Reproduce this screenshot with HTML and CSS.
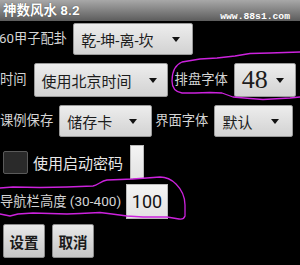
FILE: index.html
```html
<!DOCTYPE html>
<html>
<head>
<meta charset="utf-8">
<link rel="stylesheet" href="styles.css">
</head>
<body>
<div class="screen">
  <div class="titlebar">
    <span class="title">神数风水 8.2</span>
    <span class="watermark">www.88s1.com</span>
  </div>
  <div class="content">
    <div class="row row1">
      <span class="label l-gua">60甲子配卦</span>
      <div class="spinner s-gua"><span class="val">乾-坤-离-坎</span><span class="arrow"></span></div>
    </div>
    <div class="row row2">
      <span class="label">时间</span>
      <div class="spinner s-time"><span class="val">使用北京时间</span><span class="arrow"></span></div>
      <span class="label">排盘字体</span>
      <div class="spinner s-size"><span class="val big">48</span><span class="arrow"></span></div>
    </div>
    <div class="row row3">
      <span class="label">课例保存</span>
      <div class="spinner s-save"><span class="val">储存卡</span><span class="arrow"></span></div>
      <span class="label l-ui">界面字体</span>
      <div class="spinner s-font"><span class="val">默认</span><span class="arrow"></span></div>
    </div>
    <div class="row row4">
      <span class="checkbox"></span>
      <span class="check-label">使用启动密码</span>
      <span class="edit narrow"></span>
    </div>
    <div class="row row5">
      <span class="label l-nav">导航栏高度 <span class="range">(30-400)</span></span>
      <span class="edit num">100</span>
    </div>
    <div class="row row6">
      <span class="btn">设置</span>
      <span class="btn">取消</span>
    </div>
  </div>
  <svg class="marks" width="300" height="265" viewBox="0 0 300 265">
    <path d="M300,97 L290,98 L263,99.5 L250,98.5 L233,97 L222,93 L210,92.5 L195,93 L182,93 C176,92 172,88 172,81 C172,73 175,65 182,62 L200,59 L217,58 L235,56 L250,53.5 L270,53 L300,52" />
    <path d="M0,188 L13,187 L40,187.5 L67,187 L93,186 C98,185 101,181 107,180 L133,179 L160,177 C166,177 171,179 176,184 C182,190 185,197 185,205 L185,216 C184,219 182,219.5 179,219 L167,217 L143,217 L127,216 L112,214 L100,212.5 L80,213.5 L67,214 L33,213 L18,214 L10,216 L0,214" />
  </svg>
</div>
</body>
</html>
```

FILE: styles.css
```css
html, body {
  margin: 0;
  padding: 0;
  background: #000;
}

.screen {
  position: relative;
  width: 300px;
  height: 265px;
  overflow: hidden;
  background: #000;
  font-family: "Roboto", "Noto Sans CJK SC", "Noto Sans", sans-serif;
}

.titlebar {
  height: 21px;
  display: flex;
  align-items: flex-start;
  justify-content: space-between;
  background: linear-gradient(#a8a8a8, #5c5c5c);
  padding: 0 10px 0 3px;
  box-sizing: border-box;
}

.title {
  color: #fff;
  font-size: 13.5px;
  font-weight: bold;
  line-height: 20px;
  text-shadow: 0 0 1px #333;
}

.watermark {
  color: #fff;
  font-family: "Liberation Mono", "DejaVu Sans Mono", monospace;
  font-size: 9.7px;
  font-weight: bold;
  line-height: 10px;
  margin-top: 12px;
}

.content {
  display: flex;
  flex-direction: column;
}

.row {
  display: flex;
  align-items: center;
  gap: 6px;
}

.row1 { margin-top: 2px; height: 32px; }
.row2 { margin-top: 8px; height: 34px; gap: 0; }
.row3 { margin-top: 8px; height: 32px; gap: 0; }
.row4 { margin-top: 8px; height: 34px; gap: 0; }
.row5 { margin-top: 5px; height: 35px; }
.row6 { margin-top: 5px; height: 34px; gap: 7px; padding-left: 3px; }

.label {
  color: #d4d4d4;
  font-size: 13.3px;
  white-space: nowrap;
  line-height: 16px;
}

.l-gua { margin-left: -1px; }

.l-nav { width: 120px; }

.range { font-size: 13.6px; }

.spinner {
  height: 100%;
  box-sizing: border-box;
  display: flex;
  align-items: center;
  justify-content: space-between;
  padding: 0 10px 0 7px;
  background: linear-gradient(#ededed, #d2d2d2);
  border: 1px solid #9a9a9a;
  border-radius: 2px;
  color: #1c1c1c;
  font-size: 15px;
}

.val { white-space: nowrap; }

.big {
  font-family: "Liberation Serif", serif;
  font-size: 26px;
  line-height: 26px;
}

.arrow {
  width: 0;
  height: 0;
  border-left: 4.5px solid transparent;
  border-right: 4.5px solid transparent;
  border-top: 5px solid #111;
  margin-top: 1px;
}

.s-gua { width: 120px; padding-right: 12px; }
.s-time { width: 134px; margin-left: 7px; margin-right: 7px; padding-right: 10px; }
.s-size { width: 62px; margin-left: 6px; padding-right: 11px; }
.s-save { width: 93px; margin-left: 6px; margin-right: 3px; padding-right: 14px; }
.s-font { width: 79px; margin-left: 6px; padding-right: 13px; }

.checkbox {
  width: 25px;
  height: 23px;
  box-sizing: border-box;
  margin-left: 3px;
  background: #2a2a2a;
  border: 1px solid #5a5a5a;
  border-radius: 2px;
}

.check-label {
  color: #e8e8e8;
  font-size: 15px;
  margin-left: 5px;
  white-space: nowrap;
}

.edit {
  height: 100%;
  box-sizing: border-box;
  background: linear-gradient(#f4f4f4, #e2e2e2);
  border: 1px solid #bbb;
}

.narrow {
  width: 14px;
  margin-left: 7px;
}

.num {
  width: 42px;
  display: flex;
  align-items: center;
  justify-content: center;
  color: #111;
  font-family: "Roboto", "Noto Sans", sans-serif;
  font-size: 18px;
}

.btn {
  width: 42px;
  height: 100%;
  box-sizing: border-box;
  display: flex;
  align-items: center;
  justify-content: center;
  background: linear-gradient(#e8e8e8, #c6c6c6);
  border: 1px solid #8c8c8c;
  border-radius: 2px;
  color: #1a1a1a;
  font-size: 14.5px;
  font-weight: bold;
}

.marks {
  position: absolute;
  left: 0;
  top: 0;
  pointer-events: none;
}

.marks path {
  fill: none;
  stroke: #cc22dd;
  stroke-width: 1.3;
  stroke-linejoin: round;
  stroke-linecap: round;
}
```
